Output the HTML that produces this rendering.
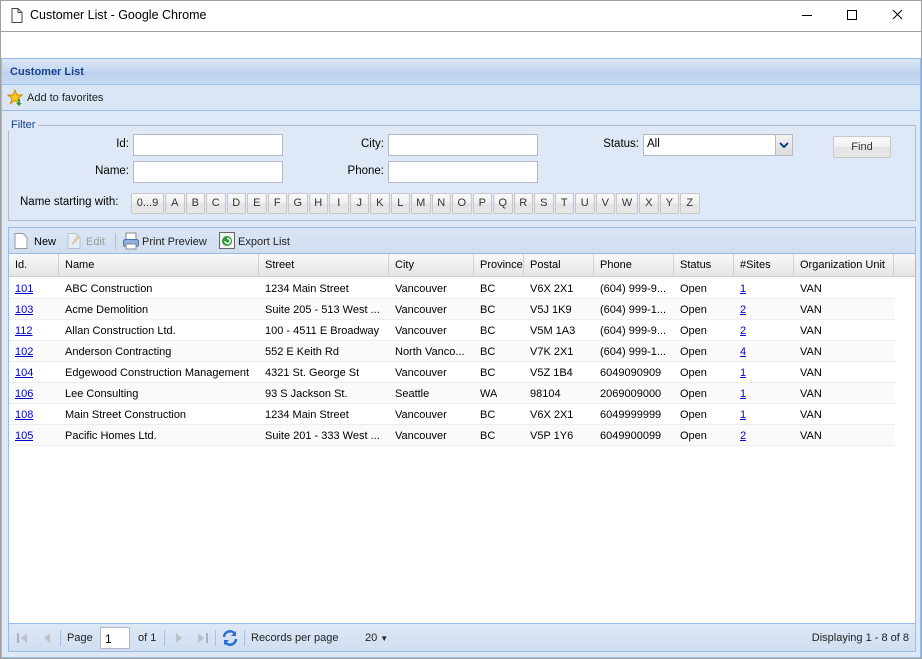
<!DOCTYPE html>
<html><head><meta charset="utf-8"><style>
*{box-sizing:border-box;margin:0;padding:0}
body{width:922px;height:659px;overflow:hidden;background:#fff;font-family:"Liberation Sans",Tahoma,sans-serif;font-size:11px;color:#000;position:relative}
.abs{position:absolute}
.win{left:0;top:0;width:922px;height:659px;border:1px solid #a0a0a0}
.title{left:30px;top:8px;font-size:12.5px;color:#000}
.panel{left:1px;top:58px;width:920px;height:600px;border:1px solid #99bbe8;background:#dfe8f6}
.ph{left:0;top:0;width:918px;height:26px;background:linear-gradient(#dae7f6,#c7d8f0 45%,#bcd0ee 55%,#c8daf2);border-bottom:1px solid #99bbe8;font-weight:bold;color:#15428b;padding:7px 0 0 8px;font-size:11px}
.tb{left:0;top:26px;width:918px;height:26px;background:#d9e6f5;border-bottom:1px solid #99bbe8}
.fs{left:6px;top:66px;width:908px;height:96px;border:1px solid #b5b8c8}
.lg{left:6px;top:60px;background:#dfe8f6;padding:0 3px;color:#15428b}
.lbl{text-align:right;font-size:11.5px;color:#000}
.inp{background:#fff;border:1px solid #b5b8c8;height:22px}
.btn{border:1px solid #c8c8c8;border-radius:2px;background:linear-gradient(#fafafa,#f0f0f0 50%,#e3e3e3 51%,#e8e8e8);text-align:center;color:#333;font-size:11px}
.letters{left:129px;top:134px;display:flex;gap:1px}
.letters div{width:19.5px;height:21px;line-height:19px}
.grid{left:6px;top:168px;width:908px;height:425px;border:1px solid #99bbe8;background:#fff}
.gtb{left:0;top:0;width:906px;height:26px;background:linear-gradient(#dae6f4,#d0def0);border-bottom:1px solid #99bbe8}
.gh{left:0;top:26px;width:906px;height:23px;background:linear-gradient(#f9f9f9,#e5e5e5);border-bottom:1px solid #d0d0d0}
.gh div{position:absolute;top:0;height:22px;line-height:23px;padding-left:6px;border-right:1px solid #d0d0d0;color:#000;white-space:nowrap;overflow:hidden}
.row{position:absolute;left:0;width:886px;height:21px;border-bottom:1px solid #ededed}
.row div{position:absolute;top:1px;line-height:20px;padding-left:6px;white-space:nowrap;overflow:hidden}
.row a{color:#0000cc;text-decoration:underline}
.ft{left:0;top:395px;width:906px;height:28px;background:linear-gradient(#dde8f5,#d0def0);border-top:1px solid #99bbe8}
.sep{width:1px;height:16px;background:#a8c0e0}
</style></head><body>
<div class="abs win"></div>
<svg class="abs" style="left:11px;top:8px" width="12" height="15"><path d="M1 .5h6l4 4v10H1z M7 .5v4h4" fill="#fff" stroke="#444"/></svg>
<div class="abs title">Customer List - Google Chrome</div>
<svg class="abs" style="left:800px;top:8px" width="110" height="16"><path d="M2 7.5h10" stroke="#000"/><rect x="47.5" y="2.5" width="9" height="9" fill="none" stroke="#000"/><path d="M93 2l9 9M102 2l-9 9" stroke="#000"/></svg>
<div class="abs" style="left:1px;top:31px;width:920px;height:1px;background:#a0a0a0"></div>

<div class="abs panel">
 <div class="abs ph">Customer List</div>
 <div class="abs tb">
  <svg class="abs" style="left:5px;top:4px" width="17" height="17"><path d="M8 1l2 5h5l-4 3.5 1.5 5L8 11.5 3.5 14.5 5 9.5 1 6h5z" fill="#f8c820" stroke="#d08a00"/><path d="M11 10v4h-2l3 3 3-3h-2v-4z" fill="#3a9a2a"/></svg>
  <div class="abs" style="left:25px;top:7px;color:#222">Add to favorites</div>
 </div>
 <div class="abs fs"></div>
 <div class="abs lg">Filter</div>
 <div class="abs lbl" style="left:60px;top:79px;width:67px">Id:</div>
 <div class="abs inp" style="left:131px;top:75px;width:150px"></div>
 <div class="abs lbl" style="left:60px;top:106px;width:67px">Name:</div>
 <div class="abs inp" style="left:131px;top:102px;width:150px"></div>
 <div class="abs lbl" style="left:310px;top:79px;width:72px">City:</div>
 <div class="abs inp" style="left:386px;top:75px;width:150px"></div>
 <div class="abs lbl" style="left:570px;top:106px;width:0"></div>
 <div class="abs lbl" style="left:310px;top:106px;width:72px">Phone:</div>
 <div class="abs inp" style="left:386px;top:102px;width:150px"></div>
 <div class="abs lbl" style="left:570px;top:79px;width:67px">Status:</div>
 <div class="abs inp" style="left:641px;top:75px;width:150px;padding:3px 0 0 3px;font-size:11.5px">All
  <div class="abs" style="right:0;top:0;width:17px;height:20px;border-left:1px solid #b5b8c8;background:linear-gradient(#f4f4f4,#dcdcdc)"><svg width="16" height="20"><path d="M4 8l4 4 4-4" fill="none" stroke="#15428b" stroke-width="2"/></svg></div>
 </div>
 <div class="abs btn" style="left:831px;top:77px;width:58px;height:22px;line-height:20px">Find</div>
 <div class="abs" style="left:18px;top:137px;font-size:11.5px">Name starting with:</div>
 <div class="abs letters">
  <div class="btn" style="width:33px">0...9</div><div class="btn">A</div><div class="btn">B</div><div class="btn">C</div><div class="btn">D</div><div class="btn">E</div><div class="btn">F</div><div class="btn">G</div><div class="btn">H</div><div class="btn">I</div><div class="btn">J</div><div class="btn">K</div><div class="btn">L</div><div class="btn">M</div><div class="btn">N</div><div class="btn">O</div><div class="btn">P</div><div class="btn">Q</div><div class="btn">R</div><div class="btn">S</div><div class="btn">T</div><div class="btn">U</div><div class="btn">V</div><div class="btn" style="width:22px">W</div><div class="btn">X</div><div class="btn">Y</div><div class="btn">Z</div>
 </div>

 <div class="abs grid">
  <div class="abs gtb">
   <svg class="abs" style="left:5px;top:5px" width="14" height="16"><path d="M1 .5h8l4 4v11H1z" fill="#fff" stroke="#999"/></svg>
   <div class="abs" style="left:25px;top:8px">New</div>
   <svg class="abs" style="left:58px;top:5px" width="14" height="16" opacity=".45"><path d="M1 .5h8l4 4v11H1z" fill="#fff" stroke="#999"/><path d="M4 13l2-5 5-6 2 2-5 6z" fill="#e8b040"/></svg>
   <div class="abs" style="left:77px;top:8px;color:#999">Edit</div>
   <div class="abs sep" style="left:106px;top:5px"></div>
   <svg class="abs" style="left:113px;top:4px" width="18" height="18"><rect x="4" y="1" width="10" height="7" fill="#fff" stroke="#888"/><rect x="1.5" y="7.5" width="15" height="7" rx="2" fill="#8fb0e0" stroke="#4a70b0"/><rect x="4" y="12" width="10" height="5" fill="#fff" stroke="#888"/></svg>
   <div class="abs" style="left:133px;top:8px;color:#222">Print Preview</div>
   <svg class="abs" style="left:210px;top:4px" width="17" height="18"><rect x=".5" y=".5" width="15" height="16" fill="#f4f4f4" stroke="#666"/><circle cx="8" cy="9" r="5" fill="#2a9a3a"/><path d="M6 9a2.5 2.5 0 1 0 2-2.5" fill="none" stroke="#fff" stroke-width="1.5"/></svg>
   <div class="abs" style="left:229px;top:8px;color:#222">Export List</div>
  </div>
  <div class="abs gh">
   <div style="left:0;width:50px">Id.</div><div style="left:50px;width:200px">Name</div><div style="left:250px;width:130px">Street</div><div style="left:380px;width:85px">City</div><div style="left:465px;width:50px">Province</div><div style="left:515px;width:70px">Postal</div><div style="left:585px;width:80px">Phone</div><div style="left:665px;width:60px">Status</div><div style="left:725px;width:60px">#Sites</div><div style="left:785px;width:100px">Organization Unit</div>
  </div>
  <div class="row" style="top:50px"><div style="left:0"><a>101</a></div><div style="left:50px">ABC Construction</div><div style="left:250px">1234 Main Street</div><div style="left:380px">Vancouver</div><div style="left:465px">BC</div><div style="left:515px">V6X 2X1</div><div style="left:585px">(604) 999-9...</div><div style="left:665px">Open</div><div style="left:725px"><a>1</a></div><div style="left:785px">VAN</div></div>
  <div class="row" style="top:71px;background:#fafafa"><div style="left:0"><a>103</a></div><div style="left:50px">Acme Demolition</div><div style="left:250px">Suite 205 - 513 West ...</div><div style="left:380px">Vancouver</div><div style="left:465px">BC</div><div style="left:515px">V5J 1K9</div><div style="left:585px">(604) 999-1...</div><div style="left:665px">Open</div><div style="left:725px"><a>2</a></div><div style="left:785px">VAN</div></div>
  <div class="row" style="top:92px"><div style="left:0"><a>112</a></div><div style="left:50px">Allan Construction Ltd.</div><div style="left:250px">100 - 4511 E Broadway</div><div style="left:380px">Vancouver</div><div style="left:465px">BC</div><div style="left:515px">V5M 1A3</div><div style="left:585px">(604) 999-9...</div><div style="left:665px">Open</div><div style="left:725px"><a>2</a></div><div style="left:785px">VAN</div></div>
  <div class="row" style="top:113px;background:#fafafa"><div style="left:0"><a>102</a></div><div style="left:50px">Anderson Contracting</div><div style="left:250px">552 E Keith Rd</div><div style="left:380px">North Vanco...</div><div style="left:465px">BC</div><div style="left:515px">V7K 2X1</div><div style="left:585px">(604) 999-1...</div><div style="left:665px">Open</div><div style="left:725px"><a>4</a></div><div style="left:785px">VAN</div></div>
  <div class="row" style="top:134px"><div style="left:0"><a>104</a></div><div style="left:50px">Edgewood Construction Management</div><div style="left:250px">4321 St. George St</div><div style="left:380px">Vancouver</div><div style="left:465px">BC</div><div style="left:515px">V5Z 1B4</div><div style="left:585px">6049090909</div><div style="left:665px">Open</div><div style="left:725px"><a>1</a></div><div style="left:785px">VAN</div></div>
  <div class="row" style="top:155px;background:#fafafa"><div style="left:0"><a>106</a></div><div style="left:50px">Lee Consulting</div><div style="left:250px">93 S Jackson St.</div><div style="left:380px">Seattle</div><div style="left:465px">WA</div><div style="left:515px">98104</div><div style="left:585px">2069009000</div><div style="left:665px">Open</div><div style="left:725px"><a>1</a></div><div style="left:785px">VAN</div></div>
  <div class="row" style="top:176px"><div style="left:0"><a>108</a></div><div style="left:50px">Main Street Construction</div><div style="left:250px">1234 Main Street</div><div style="left:380px">Vancouver</div><div style="left:465px">BC</div><div style="left:515px">V6X 2X1</div><div style="left:585px">6049999999</div><div style="left:665px">Open</div><div style="left:725px"><a>1</a></div><div style="left:785px">VAN</div></div>
  <div class="row" style="top:197px;background:#fafafa"><div style="left:0"><a>105</a></div><div style="left:50px">Pacific Homes Ltd.</div><div style="left:250px">Suite 201 - 333 West ...</div><div style="left:380px">Vancouver</div><div style="left:465px">BC</div><div style="left:515px">V5P 1Y6</div><div style="left:585px">6049900099</div><div style="left:665px">Open</div><div style="left:725px"><a>2</a></div><div style="left:785px">VAN</div></div>
  <div class="abs ft">
   <svg class="abs" style="left:6px;top:6px" width="40" height="16" opacity=".45"><path d="M3 3v10" stroke="#777" stroke-width="2"/><path d="M12 3l-6 5 6 5z" fill="#999"/><path d="M35 3l-6 5 6 5z" fill="#999"/></svg>
   <div class="abs sep" style="left:51px;top:6px"></div>
   <div class="abs" style="left:58px;top:8px;color:#222">Page</div>
   <div class="abs inp" style="left:91px;top:3px;width:30px;height:22px;padding:4px 0 0 4px;font-size:12px">1</div>
   <div class="abs" style="left:129px;top:8px;color:#222">of 1</div>
   <div class="abs sep" style="left:155px;top:6px"></div>
   <svg class="abs" style="left:162px;top:6px" width="40" height="16" opacity=".45"><path d="M5 3l6 5-6 5z" fill="#999"/><path d="M27 3l6 5-6 5z" fill="#999"/><path d="M36 3v10" stroke="#777" stroke-width="2"/></svg>
   <div class="abs sep" style="left:206px;top:6px"></div>
   <svg class="abs" style="left:212px;top:5px" width="18" height="18"><path d="M3 8a6 6 0 0 1 11-3M15 10a6 6 0 0 1-11 3" fill="none" stroke="#2a70d0" stroke-width="2.5"/><path d="M15 2v5h-5z M3 16v-5h5z" fill="#2a70d0"/></svg>
   <div class="abs sep" style="left:235px;top:6px"></div>
   <div class="abs" style="left:242px;top:8px;color:#222">Records per page</div>
   <div class="abs" style="left:356px;top:8px;color:#222">20 <span style="font-size:8px">▼</span></div>
   <div class="abs" style="right:6px;top:8px;color:#222">Displaying 1 - 8 of 8</div>
  </div>
 </div>
</div>
</body></html>
